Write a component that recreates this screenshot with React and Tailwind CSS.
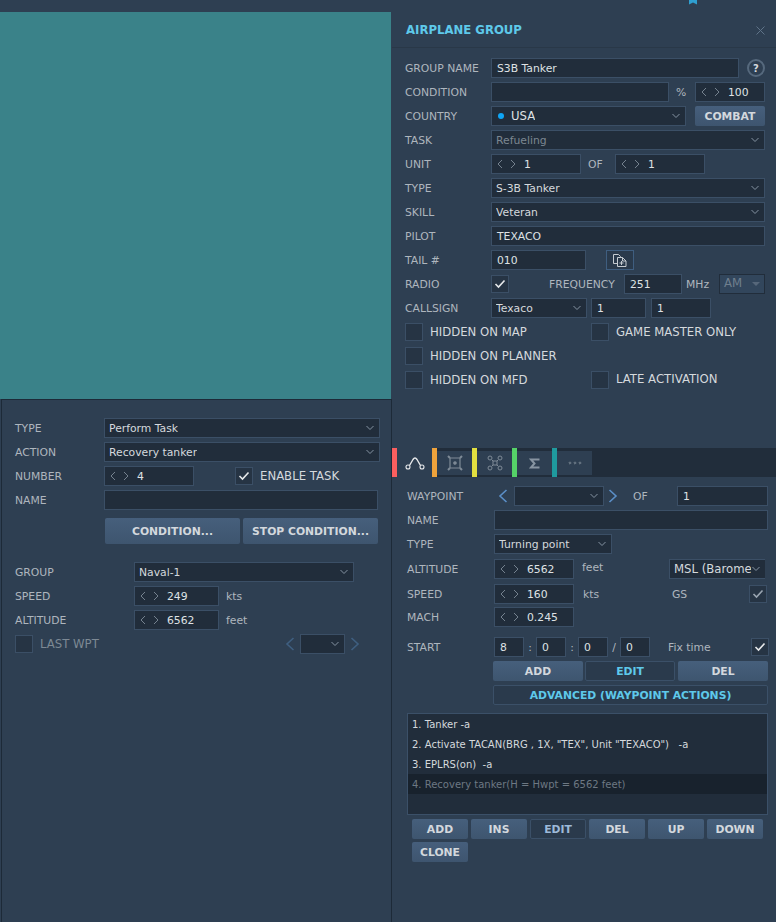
import React from "react";

const Chevron = () => (
  <svg width="10" height="6" viewBox="0 0 10 6" fill="none" stroke="#8593a2" strokeWidth="1" className="shrink-0 -mt-[2px]"><path d="M1.500 1l3.500 3.500L8.500 1" /></svg>
);
const Spin = () => (
  <span className="flex items-center gap-[7px] mr-2 shrink-0 -mt-[2px]">
    <svg width="6" height="10" viewBox="0 0 6 10" fill="none" stroke="#75828f" strokeWidth="1"><path d="M5 1L1 5l4 4" /></svg>
    <svg width="6" height="10" viewBox="0 0 6 10" fill="none" stroke="#75828f" strokeWidth="1"><path d="M1 1l4 4-4 4" /></svg>
  </span>
);
const Check = ({ dim }) => (
  <svg width="12" height="10" viewBox="0 0 12 10" fill="none" stroke={dim ? "#9aa5b1" : "#e6e8ea"} strokeWidth="1.600"><path d="M1.500 5l3 3 6-6.500" /></svg>
);
const Box = ({ checked, dim, className = "" }) => (
  <span className={"w-[18px] h-[18px] shrink-0 flex items-center justify-center bg-[#263444] border border-[#3b4f66] " + className}>
    {checked && <Check dim={dim} />}
  </span>
);
const Input = ({ children, className = "" }) => (
  <div className={"h-5 shrink-0 flex items-center pl-[5px] pt-[2px] bg-[#212d3b] border border-[#3b4f66] text-[#dfe2e5] text-[10.8px] whitespace-nowrap overflow-hidden " + className}>{children}</div>
);
const Select = ({ children, className = "", dim }) => (
  <div className={"h-5 shrink-0 flex items-center justify-between pl-[4px] pr-[4px] pt-[2px] bg-[#212d3b] border border-[#3b4f66] text-[10.8px] whitespace-nowrap " + (dim ? "text-[#7c8791] " : "text-[#d5d9dd] ") + className}>
    <span className="overflow-hidden">{children}</span><Chevron />
  </div>
);
const Label = ({ children, className = "" }) => (
  <span className={"text-[10.8px] pt-[2px] text-[#aeb6be] whitespace-nowrap shrink-0 " + className}>{children}</span>
);
const Btn = ({ children, className = "" }) => (
  <div className={"flex items-center justify-center rounded-[2px] bg-gradient-to-b from-[#465f7c] to-[#3e556f] text-[#d3d8dd] font-bold text-[10.8px] pt-[2px] whitespace-nowrap shrink-0 " + className}>{children}</div>
);
const OutBtn = ({ children, className = "" }) => (
  <div className={"flex items-center justify-center rounded-[2px] border border-[#3b5068] bg-[#2a3a4c] font-bold text-[10.8px] pt-[2px] whitespace-nowrap shrink-0 " + className}>{children}</div>
);
const Arrow = ({ left, color = "#5b8fc7" }) => (
  <svg width="10" height="14" viewBox="0 0 10 14" fill="none" stroke={color} strokeWidth="1.600" className="shrink-0">
    <path d={left ? "M8.500 1L2 7l6.500 6" : "M1.500 1L8 7l-6.500 6"} />
  </svg>
);
const Row = ({ children, className = "" }) => (
  <div className={"flex items-center h-5 " + className}>{children}</div>
);
const Tab = ({ color, active, children }) => (
  <div className="flex h-full">
    <div className={"w-[5px] " + color} />
    <div className={"w-[35px] flex items-center justify-center " + (active ? "bg-[#2e3f52]" : "bg-[#2e3f52] mt-[3px] mb-[2px]")}>{children}</div>
  </div>
);

export default function App() {
  return (
    <div className="w-[776px] h-[922px] flex bg-[#2e3f52] overflow-hidden" style={{ fontFamily: '"DejaVu Sans", sans-serif' }}>
      {/* LEFT */}
      <div className="w-[392px] shrink-0 flex flex-col">
        <div className="h-3 shrink-0" />
        <div className="h-[387px] shrink-0 mr-[1px] bg-[#3a8289]" />
        <div className="flex-1 ml-[1px] border-l border-t border-r border-[#1d2a38] pt-[18px]">
          <Row><Label className="ml-[13px] w-[89px]">TYPE</Label><Select className="w-[276px]">Perform Task</Select></Row>
          <Row className="mt-1"><Label className="ml-[13px] w-[89px]">ACTION</Label><Select className="w-[276px]">Recovery tanker</Select></Row>
          <Row className="mt-1">
            <Label className="ml-[13px] w-[89px]">NUMBER</Label>
            <Input className="w-[90px]"><Spin />4</Input>
            <Box checked className="ml-[41px]" />
            <span className="ml-[7px] pt-[2px] text-[11.7px] text-[#d5d9dd]">ENABLE TASK</span>
          </Row>
          <Row className="mt-1"><Label className="ml-[13px] w-[89px]">NAME</Label><Input className="w-[274px]" /></Row>
          <div className="flex mt-2 ml-[103px] gap-[3px] h-[26px]">
            <Btn className="w-[135px] h-[26px]">CONDITION...</Btn>
            <Btn className="w-[135px] h-[26px]">STOP CONDITION...</Btn>
          </div>
          <Row className="mt-[18px]"><Label className="ml-[13px] w-[119px]">GROUP</Label><Select className="w-[220px]">Naval-1</Select></Row>
          <Row className="mt-1"><Label className="ml-[13px] w-[119px]">SPEED</Label><Input className="w-[85px]"><Spin />249</Input><Label className="ml-[7px]">kts</Label></Row>
          <Row className="mt-1"><Label className="ml-[13px] w-[119px]">ALTITUDE</Label><Input className="w-[85px]"><Spin />6562</Input><Label className="ml-[7px]">feet</Label></Row>
          <Row className="mt-1">
            <Box className="ml-[13px]" />
            <span className="ml-[7px] pt-[2px] text-[11.7px] text-[#7d8994]">LAST WPT</span>
            <span className="ml-[186px]"><Arrow left color="#3f5f80" /></span>
            <Select className="w-[45px] ml-[5px]"></Select>
            <span className="ml-[5px]"><Arrow color="#3f5f80" /></span>
          </Row>
        </div>
      </div>

      {/* RIGHT */}
      <div className="flex-1 flex flex-col relative">
        <svg width="10" height="5" viewBox="0 0 10 5" className="absolute left-[296px] top-0"><path d="M1 0h8v4.500L5 2.500 1 4.500z" fill="#2f9fd0" /></svg>
        <div className="h-[48px] shrink-0 flex items-center justify-between pl-[14px] pr-[11px] pt-[14px] border-b border-[#293848]">
          <span className="text-[11.7px] font-bold text-[#5ec9ea]">AIRPLANE GROUP</span>
          <svg width="9" height="9" viewBox="0 0 9 9" fill="none" stroke="#5f7388" strokeWidth="1"><path d="M.5.500l8 8M8.500.500l-8 8" /></svg>
        </div>
        <div className="pt-[10px] pl-[13px]">
          <Row>
            <Label className="w-[86px]">GROUP NAME</Label>
            <Input className="w-[248px]">S3B Tanker</Input>
            <span className="ml-2 w-[18px] h-[18px] rounded-full border-2 border-[#56697d] text-[#d5d9dd] text-[10px] font-bold flex items-center justify-center">?</span>
          </Row>
          <Row className="mt-1">
            <Label className="w-[86px]">CONDITION</Label>
            <Input className="w-[178px]" />
            <Label className="ml-[7px] w-[19px] text-[#7d8994]">%</Label>
            <Input className="w-[70px]"><Spin />100</Input>
          </Row>
          <Row className="mt-1">
            <Label className="w-[86px]">COUNTRY</Label>
            <Select className="w-[195px]"><span className="flex items-center pl-[2px]"><span className="w-[6px] h-[6px] rounded-full bg-[#0ea5f5] mr-[7px] -mt-[2px]" /><span className="text-[#dfe2e5] text-[11.7px]">USA</span></span></Select>
            <Btn className="w-[70px] h-5 ml-[9px]">COMBAT</Btn>
          </Row>
          <Row className="mt-1"><Label className="w-[86px]">TASK</Label><Select dim className="w-[274px]">Refueling</Select></Row>
          <Row className="mt-1">
            <Label className="w-[86px]">UNIT</Label>
            <Input className="w-[90px]"><Spin />1</Input>
            <Label className="ml-[7px] w-[27px] text-[#7d8994]">OF</Label>
            <Input className="w-[90px]"><Spin />1</Input>
          </Row>
          <Row className="mt-1"><Label className="w-[86px]">TYPE</Label><Select className="w-[274px]">S-3B Tanker</Select></Row>
          <Row className="mt-1"><Label className="w-[86px]">SKILL</Label><Select className="w-[274px]">Veteran</Select></Row>
          <Row className="mt-1"><Label className="w-[86px]">PILOT</Label><Input className="w-[274px]">TEXACO</Input></Row>
          <Row className="mt-1">
            <Label className="w-[86px]">TAIL #</Label>
            <Input className="w-[95px]">010</Input>
            <span className="ml-5 w-[28px] h-5 border border-[#3f5e80] bg-[#2a3a4c] flex items-center justify-center">
              <svg width="16" height="15" viewBox="0 0 16 15" fill="none" stroke="#c5cbd1" strokeWidth="1"><path d="M5 10.500H1.500v-9h5l2 2v1" /><path d="M5.500 4.500h5l3.500 3.500v5.500H5.500zM10.500 4.500V8H14M7.500 10h4M9.500 8v4" /></svg>
            </span>
          </Row>
          <Row className="mt-1">
            <Label className="w-[86px]">RADIO</Label>
            <Box checked />
            <Label className="ml-[40px] w-[75px]">FREQUENCY</Label>
            <Input className="w-[58px]">251</Input>
            <Label className="ml-1 w-[33px] text-[#7d8994]">MHz</Label>
            <div className="w-[46px] h-5 flex items-center justify-between px-[4px] bg-[#32465c] border border-[#212d3b] text-[#6f7f8e] text-[11.7px]">
              AM
              <span className="w-0 h-0 border-l-[4px] border-r-[4px] border-t-[4px] border-l-transparent border-r-transparent border-t-[#56677a]" />
            </div>
          </Row>
          <Row className="mt-1">
            <Label className="w-[86px]">CALLSIGN</Label>
            <Select className="w-[96px]">Texaco</Select>
            <Input className="w-[55px] ml-1">1</Input>
            <Input className="w-[60px] ml-[5px]">1</Input>
          </Row>
          <div className="flex items-center h-[18px] mt-[5px]">
            <Box /><span className="ml-[7px] pt-[2px] w-[161px] text-[11.7px] text-[#d5d9dd]">HIDDEN ON MAP</span>
            <Box /><span className="ml-[7px] pt-[2px] text-[11.7px] text-[#d5d9dd]">GAME MASTER ONLY</span>
          </div>
          <div className="flex items-center h-[18px] mt-[6px]">
            <Box /><span className="ml-[7px] pt-[2px] text-[11.7px] text-[#d5d9dd]">HIDDEN ON PLANNER</span>
          </div>
          <div className="flex items-center h-[18px] mt-[6px]">
            <Box /><span className="ml-[7px] pt-[2px] w-[161px] text-[11.7px] text-[#d5d9dd]">HIDDEN ON MFD</span>
            <Box /><span className="ml-[7px] text-[11.7px] text-[#d5d9dd] -mt-[1px]">LATE ACTIVATION</span>
          </div>
        </div>

        {/* tab bar */}
        <div className="mt-[59px] h-[29px] shrink-0 bg-[#212d3b] flex">
          <Tab color="bg-[#fb5f5f]" active>
            <svg width="20" height="14" viewBox="0 0 20 14" fill="none" stroke="#e8eaec" strokeWidth="1.100"><circle cx="3" cy="11" r="2" /><circle cx="17" cy="11" r="2" /><path d="M4.500 9.500L8 3.500Q10 .5 12 3.500L15.500 9.500" strokeWidth="1.400" /></svg>
          </Tab>
          <Tab color="bg-[#efa33c]">
            <svg width="16" height="16" viewBox="0 0 16 16" fill="none" stroke="#7e8a96" strokeWidth="1.200"><path d="M3 3h10v10H3z" /><circle cx="8" cy="8" r="1.200" fill="#7e8a96" /><path d="M1 1l2 2M15 1l-2 2M1 15l2-2M15 15l-2-2" strokeWidth="2" /></svg>
          </Tab>
          <Tab color="bg-[#e2df40]">
            <svg width="16" height="16" viewBox="0 0 16 16" fill="none" stroke="#7e8a96" strokeWidth="1"><circle cx="3" cy="3" r="2" /><circle cx="13" cy="3" r="2" /><circle cx="3" cy="13" r="2" /><circle cx="13" cy="13" r="2" /><path d="M5 5l1 1v4l-1 1M11 5l-1 1v4l1 1M6 6h4M6 10h4" /></svg>
          </Tab>
          <Tab color="bg-[#55d268]">
            <svg width="11" height="11" viewBox="0 0 11 11" fill="none" stroke="#8794a1" strokeWidth="2"><path d="M10.500 1.500H2l3.500 4-3.500 4h8.500" /></svg>
          </Tab>
          <Tab color="bg-[#1f9a9e]">
            <svg width="14" height="4" viewBox="0 0 14 4" fill="none" stroke="#6f7c89" strokeWidth="1"><path d="M2 .800L3.200 2 2 3.200.8 2zM7 .800L8.200 2 7 3.200 5.800 2zM12 .800L13.200 2 12 3.200 10.800 2z" /></svg>
          </Tab>
        </div>

        <div className="pt-[9px] pl-[15px]">
          <Row>
            <Label className="w-[91px]">WAYPOINT</Label>
            <Arrow left />
            <Select className="w-[90px] ml-[6px]"></Select>
            <span className="ml-[4px]"><Arrow /></span>
            <Label className="ml-[15px] w-[44px] text-[#aeb6be]">OF</Label>
            <Input className="w-[91px]">1</Input>
          </Row>
          <Row className="mt-1"><Label className="w-[87px]">NAME</Label><Input className="w-[274px]" /></Row>
          <Row className="mt-1"><Label className="w-[87px]">TYPE</Label><Select className="w-[118px]">Turning point</Select></Row>
          <Row className="mt-[5px]">
            <Label className="w-[87px]">ALTITUDE</Label>
            <Input className="w-[80px]"><Spin />6562</Input>
            <Label className="ml-2 w-[87px] -mt-[3px]">feet</Label>
            <Select className="w-[96px] border-r-0 pr-0 text-[11.7px]">MSL (Barome</Select>
          </Row>
          <Row className="mt-[5px]">
            <Label className="w-[87px]">SPEED</Label>
            <Input className="w-[80px]"><Spin />160</Input>
            <Label className="ml-[9px] w-[89px]">kts</Label>
            <Label className="w-[77px]">GS</Label>
            <Box checked dim />
          </Row>
          <Row className="mt-[3px]"><Label className="w-[87px]">MACH</Label><Input className="w-[80px]"><Spin />0.245</Input></Row>
          <Row className="mt-[10px]">
            <Label className="w-[87px]">START</Label>
            <Input className="w-[30px]">8</Input>
            <Label className="w-[12px] text-center">:</Label>
            <Input className="w-[30px]">0</Input>
            <Label className="w-[12px] text-center">:</Label>
            <Input className="w-[30px]">0</Input>
            <Label className="w-[12px] text-center text-[#7d8994]">/</Label>
            <Input className="w-[30px]">0</Input>
            <Label className="ml-[18px] w-[83px]">Fix time</Label>
            <Box checked />
          </Row>
          <div className="flex mt-1 ml-[86px] h-5 gap-[2px]">
            <Btn className="w-[90px] h-5">ADD</Btn>
            <OutBtn className="w-[90px] h-5 text-[#5ec9ea]">EDIT</OutBtn>
            <Btn className="w-[90px] h-5 ml-[1px]">DEL</Btn>
          </div>
          <OutBtn className="mt-1 ml-[86px] w-[275px] h-5 text-[#5ec9ea]">ADVANCED (WAYPOINT ACTIONS)</OutBtn>
          <div className="mt-2 w-[361px] h-[102px] bg-[#212d3b] border border-[#3b5068] text-[10px] whitespace-pre text-[#d5d9dd]">
            <div className="h-5 flex items-center pl-1 pt-[1px]">1. Tanker -a</div>
            <div className="h-5 flex items-center pl-1 pt-[1px]">2. Activate TACAN(BRG , 1X, "TEX", Unit "TEXACO")   -a</div>
            <div className="h-5 flex items-center pl-1 pt-[1px]">3. EPLRS(on)  -a</div>
            <div className="h-5 flex items-center pl-1 pt-[1px] bg-[#18222d] text-[#6d7883]">4. Recovery tanker(H = Hwpt = 6562 feet)</div>
          </div>
          <div className="flex mt-1 ml-[5px] gap-[3px]">
            <Btn className="w-14 h-5">ADD</Btn>
            <Btn className="w-14 h-5">INS</Btn>
            <OutBtn className="w-14 h-5 text-[#9db9d8]">EDIT</OutBtn>
            <Btn className="w-14 h-5">DEL</Btn>
            <Btn className="w-14 h-5">UP</Btn>
            <Btn className="w-14 h-5">DOWN</Btn>
          </div>
          <Btn className="mt-[3px] ml-[5px] w-14 h-5">CLONE</Btn>
        </div>
      </div>
    </div>
  );
}
